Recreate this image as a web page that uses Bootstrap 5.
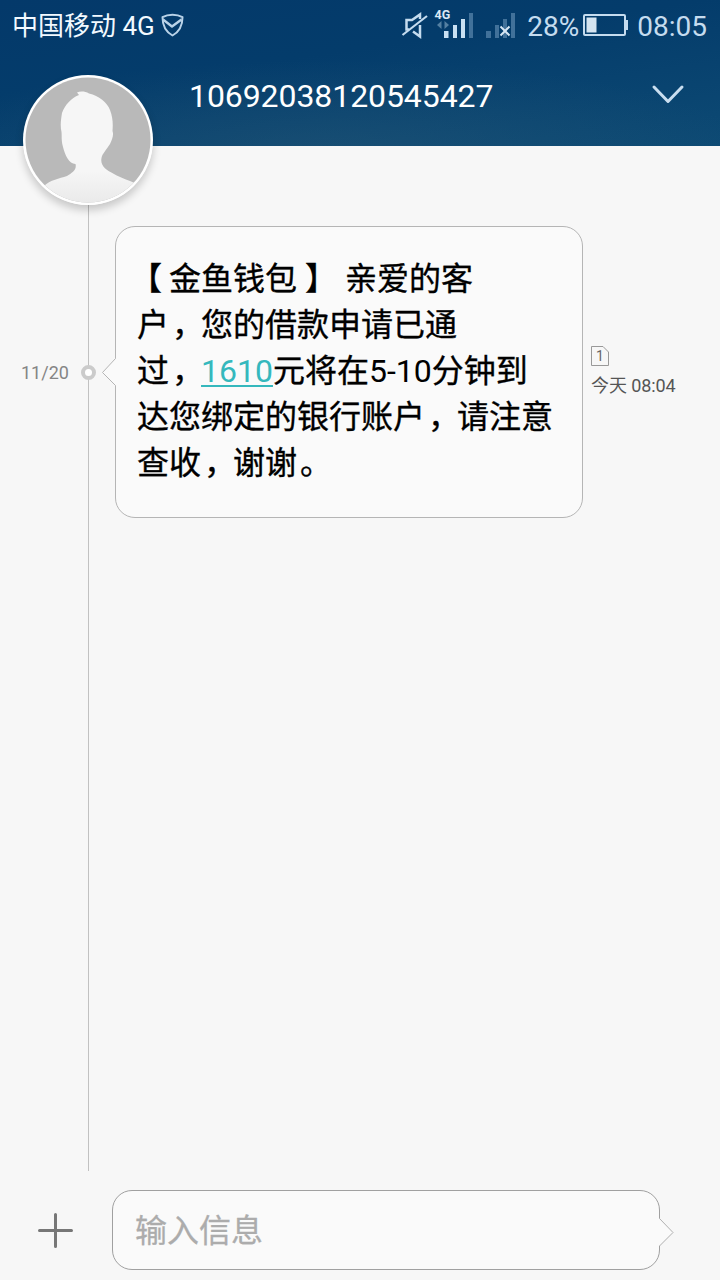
<!DOCTYPE html>
<html lang="zh-CN">
<head>
<meta charset="utf-8">
<meta name="viewport" content="width=device-width, initial-scale=1">
<title>10692038120545427</title>
<link href="https://cdn.jsdelivr.net/npm/bootstrap@5.3.0/dist/css/bootstrap.min.css" rel="stylesheet">
<style>
body{font-family:Roboto,"Noto Sans CJK SC",sans-serif;background:#f7f7f7;color:#000;height:1280px;overflow:hidden}
svg{display:block;flex:none}
.top-area{height:146px;background:radial-gradient(ellipse 420px 90px at 330px 150px,rgba(50,95,120,.35),transparent),linear-gradient(172deg,#04396a 0%,#043c6b 40%,#0d4a74 100%)}
.status-bar{height:50px;padding:0 13px 0 12px;color:#c5dcef}
.carrier{font-size:26px;line-height:50px;padding-top:1px;color:#f2f9ff}
.shield{margin-left:6px}
.status-num{font-size:28px;line-height:48px;padding-top:4px}
.percent{margin-left:10px}
.battery{margin-left:4px}
.title-bar{height:96px;padding:0 35px 0 23px}
.avatar{width:130px;height:130px;margin-top:25px;border-radius:50%;box-shadow:0 5px 9px rgba(0,0,0,.2);position:relative;z-index:2}
.peer{font-size:32px;line-height:92px;margin-left:36px;color:#fff;letter-spacing:-.08px}
.chevron{margin-top:34px}
.thread{padding-top:80px;height:1025px}
.rail{position:absolute;left:88px;top:0;bottom:0;width:1px;background:#c1c1c1}
.day{width:81px;padding:2px 0 0 21px;font-size:18px;line-height:24px;color:#858585}
.dot{width:15px;height:15px;border:4px solid #cbcbcb;border-radius:50%;background:#fff}
.bubble{width:468px;height:292px;margin-left:19px;padding:29px 20px 0 21px;border:1px solid #b5b5b5;border-radius:20px;background:#fafafa;font-size:32px;line-height:46px;-webkit-text-stroke:.35px}
.bubble .tail{position:absolute;left:-15px;top:130px}
.amount{color:#35b8bd;text-decoration:underline;text-decoration-thickness:2px;text-underline-offset:3px;-webkit-text-stroke:0}
.latin{-webkit-text-stroke:0}
.br-open{margin:0 7px 0 -7px}
.br-close{margin-left:8px}
.pt{margin:0 -3px 0 3px}
.meta-info{margin-left:8px;font-size:18px;line-height:24px;color:#555;letter-spacing:-.1px}
.sim-no{font-family:Roboto,sans-serif;font-size:14px;fill:#666}
.composer{height:109px;padding:19px 0 0 38px}
.entry{width:548px;height:80px;margin-left:39px;padding:1px 0 0 22px;border:1px solid #a0a0a0;border-radius:20px;background:#fafafa;font-size:32px;line-height:78px;color:#acacac;-webkit-text-stroke:.3px}
.entry .tip{position:absolute;right:-15px;top:26px}
</style>
</head>
<body class="d-flex flex-column">
<header class="top-area flex-shrink-0">
  <div class="status-bar d-flex align-items-center">
    <span class="carrier">中国移动 4G</span>
    <svg class="shield" width="23" height="24" viewBox="0 0 23 24" fill="none" stroke="#b9d2e8" stroke-width="2" stroke-linejoin="round"><path d="M11.5 1.800C8 1.800 4 2.800 1.500 4.200c0 8 3.800 14.800 10 18.300 6.200-3.500 10-10.300 10-18.300C19 2.800 15 1.800 11.500 1.800Z"/><path d="M2 6.500 11 13.500 20.500 6.500" stroke-width="2.400"/></svg>
    <svg class="ms-auto" width="118" height="40" viewBox="398 5 118 40">
      <g fill="none" stroke="#c5dcef" stroke-width="2.500"><path d="M408 29.500h-2.500V20H411l8-5.500V19M419 25v11.500l-7-5"/><path d="M401.500 35 426 16" stroke-width="2.200"/></g>
      <text x="433.500" y="19" font-size="12.500" font-weight="700" fill="#dbe9f5">4G</text>
      <path fill="#5480a2" d="M440.500 21v8l-4.500-4zM443.500 21v8l4.500-4z"/>
      <g fill="#c9e0f2"><rect x="443" y="31" width="4.500" height="7"/><rect x="452" y="25" width="4" height="13"/><rect x="460" y="19" width="4" height="19"/></g>
      <g fill="#41719a"><rect x="468" y="13" width="4" height="25"/><rect x="485" y="31" width="5" height="7"/><rect x="494" y="25" width="4" height="13"/><rect x="502" y="19" width="4" height="19"/><rect x="510" y="13" width="4" height="25"/></g>
      <path d="M499.500 26.500l9 9m0-9l-9 9" stroke="#d7e6f3" stroke-width="2"/>
    </svg>
    <span class="status-num percent">28%</span>
    <svg class="battery" width="46" height="24" viewBox="0 0 46 24"><rect x="1" y="2" width="41" height="20" rx="1" fill="none" stroke="#c5dcef" stroke-width="2"/><rect x="3.500" y="4.500" width="10" height="15" fill="#d5e4f0"/><rect x="42.500" y="7" width="2.500" height="10" fill="#c5dcef"/></svg>
    <span class="status-num ms-2">08:05</span>
  </div>
  <div class="title-bar d-flex align-items-start">
    <div class="avatar flex-shrink-0">
      <svg width="130" height="130" viewBox="0 0 130 130">
        <defs><clipPath id="face"><circle cx="65" cy="65" r="62.500"/></clipPath><linearGradient id="skin" x1="0" y1="0" x2="0" y2="1"><stop offset=".7" stop-color="#f6f6f6"/><stop offset="1" stop-color="#e9e9e9"/></linearGradient></defs>
        <circle cx="65" cy="65" r="65" fill="#fff"/><circle cx="65" cy="65" r="62.500" fill="#b9b9b9"/>
        <path clip-path="url(#face)" fill="url(#skin)" d="M54 17.500C57 16 62 16 66 18.500C76 21 84 27 87 35C90 43 90 49 89.500 56C91 60 89 65 87 69C84 74 79 79 78.500 83C77 91 83 95 91 99C98 103 107 106 112 108V130H20V112C28 104 36 104 44 101C49 98 54 95 52.500 89C46 89 42 80 40 72C38 65 39 61 38.500 57C37 51 38 44 39 38C42 30 48 23 56 20Z"/>
      </svg>
    </div>
    <div class="peer">10692038120545427</div>
    <svg class="chevron ms-auto" width="34" height="22" viewBox="0 0 34 22" fill="none" stroke="#c9def0" stroke-width="3" stroke-linecap="round" stroke-linejoin="round"><path d="M3 3 17 17.500 31 3"/></svg>
  </div>
</header>
<main class="thread position-relative flex-shrink-0">
  <div class="rail"></div>
  <div class="d-flex align-items-center">
    <div class="day">11/20</div>
    <div class="dot position-relative flex-shrink-0"></div>
    <div class="bubble position-relative flex-shrink-0">
      <svg class="tail" width="16" height="30" viewBox="0 0 16 30"><path d="M16 1.500h-1.500L1.500 15.500 14.500 28.500H16Z" fill="#fafafa"/><path d="M14.500 1.500 1.500 15.500 14.500 28.500" fill="none" stroke="#b5b5b5"/></svg>
      <span class="br-open">【</span>金鱼钱包<span class="br-close">】</span>&nbsp;亲爱的客<br>户<span class="pt">，</span>您的借款申请已通<br>过<span class="pt">，</span><span class="amount">1610</span>元将在<span class="latin">5-10</span>分钟到<br>达您绑定的银行账户<span class="pt">，</span>请注意<br>查收<span class="pt">，</span>谢谢<span class="pt">。</span>
    </div>
    <div class="meta-info">
      <svg width="18" height="20" viewBox="0 0 18 20"><path d="M.5.500H12L17.500 6V19.500H.5Z" fill="none" stroke="#999"/><text class="sim-no" x="5" y="15">1</text></svg>
      <div class="pt-1 mt-1 mb-n1">今天 08:04</div>
    </div>
  </div>
</main>
<footer class="composer d-flex align-items-start flex-shrink-0">
  <svg width="35" height="80" viewBox="0 0 35 80" stroke="#777" stroke-width="3" stroke-linecap="round"><path d="M1.500 40.500h32M17.500 24.500v32"/></svg>
  <div class="entry position-relative">输入信息
    <svg class="tip" width="16" height="30" viewBox="0 0 16 30"><path d="M0 1.500h1.500L15 15.500 1.500 29H0Z" fill="#fafafa"/><path d="M1.500 1.500 15 15.500 1.500 29" fill="none" stroke="#b0b0b0"/></svg>
  </div>
</footer>
<script src="https://cdn.jsdelivr.net/npm/bootstrap@5.3.0/dist/js/bootstrap.bundle.min.js"></script>
</body>
</html>
